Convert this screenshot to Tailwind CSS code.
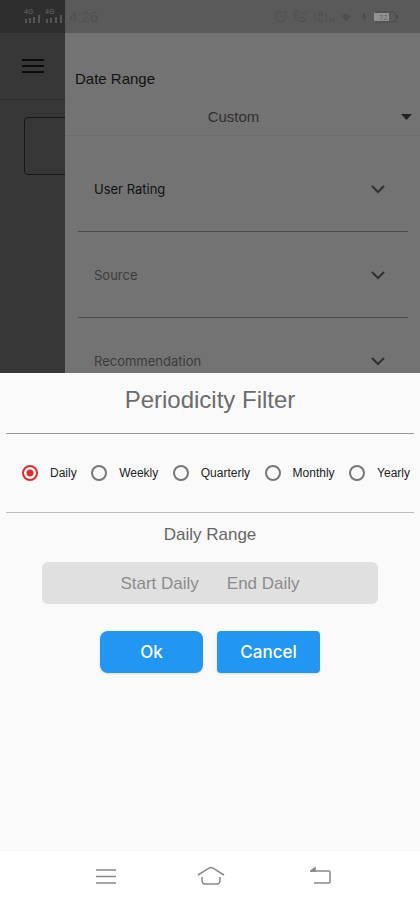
<!DOCTYPE html>
<html lang="en">
<head>
<meta charset="utf-8">
<meta name="viewport" content="width=device-width, initial-scale=1">
<title>Periodicity Filter</title>
<script src="https://cdn.jsdelivr.net/npm/@tailwindcss/browser@4"></script>
</head>
<body class="flex min-h-screen flex-col bg-[#fafafa] font-['Liberation_Sans','Arial',sans-serif]">

<div class="flex h-[373px] overflow-hidden">
  <!-- Page behind the drawer -->
  <div class="flex w-[65px] shrink-0 flex-col overflow-hidden bg-[#373737]">
    <div class="h-[33px] bg-[#2e2e2e] pt-2 pl-6">
      <svg class="h-4 w-[41px]" viewBox="0 0 41 16" fill="#565656" aria-label="Signal">
        <text x="0" y="6" font-size="7" font-weight="700">4G</text>
        <text x="21" y="6" font-size="7" font-weight="700">4G</text>
        <path d="M1 11h2v4h-2zM5 10h2v5h-2zM9 9h2v6h-2zM14 7h2v8h-2zM22 11h2v4h-2zM26 10h2v5h-2zM31 9h2v6h-2zM36 7h2v8h-2z"/>
      </svg>
    </div>
    <div class="h-[67px] border-b border-[#303030] pt-[25px] pl-[22px]">
      <button type="button" aria-label="Open menu" class="block">
        <svg class="h-4 w-[22px]" viewBox="0 0 22 16" fill="#0c0c0c"><path d="M0 1h22v2H0zM0 7h22v2H0zM0 13h22v2H0z"/></svg>
      </button>
    </div>
    <div class="mt-[17px] ml-6 h-[58px] w-20 shrink-0 rounded border border-[#181818]"></div>
  </div>

  <!-- Filter drawer -->
  <div class="flex min-w-0 flex-1 flex-col bg-[#737373]">
    <div class="flex h-[33px] shrink-0 items-center justify-between bg-[#5a5a5a] pt-px pr-[22px] pl-1 text-[#505050]">
      <span class="text-[15px]">4:26</span>
      <div class="flex items-center gap-1">
        <svg class="h-4 w-[96px]" viewBox="0 0 96 16" fill="none" stroke="#4e4e4e" aria-label="Alarm, call, network">
          <circle cx="7" cy="8" r="5"/><path d="M7 5v3h3M1 4l3-3M13 4l-3-3"/>
          <path d="M20 3c0 5 4 10 9 10l2-3-3-2-2 1-3-3 1-2-2-3zM27 3l3 3 3-4"/>
          <path d="M41 4v9M45 3v4h3v-4zM45 9v4h3v-4M52 5v8M56 9v4l4-4v4"/>
          <path d="M68 7q4-3 8 0l-4 5z" fill="#4e4e4e"/>
          <path d="M91 4l-3 4h4l-2 4" fill="#444"/>
        </svg>
        <svg class="h-3 w-6" viewBox="0 0 24 12" aria-label="Battery 72">
          <rect x="1" y="1" width="21" height="10" rx="3" fill="#5a5a5a" stroke="#4b4b4b"/><path d="M0 2h15v8H0z" fill="#929292"/><path d="M22 4h2v4h-2z" fill="#4b4b4b"/>
          <text x="5" y="9" font-size="8" fill="#666">72</text>
        </svg>
      </div>
    </div>
    <div class="border-b border-[#6c6c6c] pt-[34px] pr-2 pb-[6px] pl-[10px]">
      <label for="range" class="block text-[15px] leading-6 text-[#111]">Date Range</label>
      <div class="relative mt-[14px]">
        <select id="range" class="block h-6 w-full appearance-none bg-transparent pr-5 text-[15px] text-[#303030] [text-align-last:center]">
          <option>Custom</option>
        </select>
        <svg class="pointer-events-none absolute top-[9px] right-0 h-[6px] w-[11px]" viewBox="0 0 11 6" fill="#222"><path d="M0 0h11L5.500 6z"/></svg>
      </div>
    </div>
    <div class="pt-[10px] pr-3 pl-[13px] font-['Inter','Roboto',sans-serif] text-[13px] text-[#3c3c3c]">
      <button type="button" class="flex h-[86px] w-full items-center justify-between border-b border-[#4b4b4b] pt-[2px] pr-[22px] pl-4 text-[#111]">User Rating
        <svg class="h-[10px] w-4" viewBox="0 0 16 10" fill="none" stroke="#303030" stroke-width="2"><path d="M2 1l6 6 6-6"/></svg></button>
      <button type="button" class="flex h-[86px] w-full items-center justify-between border-b border-[#4b4b4b] pt-[2px] pr-[22px] pl-4">Source
        <svg class="h-[10px] w-4" viewBox="0 0 16 10" fill="none" stroke="#303030" stroke-width="2"><path d="M2 1l6 6 6-6"/></svg></button>
      <button type="button" class="flex h-[86px] w-full items-center justify-between border-b border-[#4b4b4b] pt-[2px] pr-[22px] pl-4">Recommendation
        <svg class="h-[10px] w-4" viewBox="0 0 16 10" fill="none" stroke="#303030" stroke-width="2"><path d="M2 1l6 6 6-6"/></svg></button>
    </div>
  </div>
</div>

<!-- Bottom sheet -->
<main class="flex flex-1 flex-col">
  <h1 class="pt-[11px] pb-[17px] text-center text-2xl leading-8 text-[#6c6c6c]">Periodicity Filter</h1>
  <div role="radiogroup" aria-label="Periodicity" class="mx-[6px] flex h-20 items-center justify-between border-y border-t-[#999] border-b-[#bbb] pr-1 pl-4 text-[12px] text-[#222]">
    <label class="flex items-center gap-3"><input type="radio" name="period" checked class="h-4 w-4 appearance-none rounded-full border-2 border-[#777] checked:border-[#e32b2b] checked:bg-[radial-gradient(circle,#e32b2b_0_3px,transparent_4px)]">Daily</label>
    <label class="flex items-center gap-3"><input type="radio" name="period" class="h-4 w-4 appearance-none rounded-full border-2 border-[#777] checked:border-[#e32b2b] checked:bg-[radial-gradient(circle,#e32b2b_0_3px,transparent_4px)]">Weekly</label>
    <label class="flex items-center gap-3"><input type="radio" name="period" class="h-4 w-4 appearance-none rounded-full border-2 border-[#777] checked:border-[#e32b2b] checked:bg-[radial-gradient(circle,#e32b2b_0_3px,transparent_4px)]">Quarterly</label>
    <label class="flex items-center gap-3"><input type="radio" name="period" class="h-4 w-4 appearance-none rounded-full border-2 border-[#777] checked:border-[#e32b2b] checked:bg-[radial-gradient(circle,#e32b2b_0_3px,transparent_4px)]">Monthly</label>
    <label class="flex items-center gap-3"><input type="radio" name="period" class="h-4 w-4 appearance-none rounded-full border-2 border-[#777] checked:border-[#e32b2b] checked:bg-[radial-gradient(circle,#e32b2b_0_3px,transparent_4px)]">Yearly</label>
  </div>
  <h2 class="pt-[10px] text-center text-[17px] leading-6 text-[#666]">Daily Range</h2>
  <div class="mx-[42px] mt-[15px] flex h-[42px] items-center justify-center gap-7 rounded-md bg-[#e0e0e0] pt-[2px] text-[17px] text-[#8c8c8c]">
    <button type="button">Start Daily</button>
    <button type="button">End Daily</button>
  </div>
  <div class="mt-[27px] flex justify-center gap-[14px] font-['Inter','Roboto',sans-serif] text-[17px] font-medium text-white">
    <button type="button" class="h-[42px] w-[103px] rounded-lg bg-[#2196f3] pt-[2px] shadow">Ok</button>
    <button type="button" class="h-[42px] w-[103px] rounded bg-[#2196f3] pt-[2px] shadow">Cancel</button>
  </div>
</main>

<!-- System navigation -->
<nav class="flex h-12 items-center justify-between bg-white pr-[88px] pl-[95px]">
  <button type="button" aria-label="Recent apps"><svg class="h-5 w-[22px]" viewBox="0 0 22 20" fill="none" stroke="#888" stroke-width="1.500"><path d="M1 4h20M1 10.500h20M1 17h20"/></svg></button>
  <button type="button" aria-label="Home" class="mr-[6px]"><svg class="h-5 w-7" viewBox="0 0 28 20" fill="none" stroke="#888" stroke-width="1.500"><path d="M1 9L12 2.200q2-1.200 4 0L27 9M5 11v3q0 4 3 4h12q3 0 3-4v-3"/></svg></button>
  <button type="button" aria-label="Back"><svg class="h-5 w-[22px]" viewBox="0 0 22 20" fill="none" stroke="#888" stroke-width="1.500"><path d="M5 2L1 5h18q1 0 1 1v10q0 1-1 1H4"/><path d="M5 2v3H1z" fill="#888"/></svg></button>
</nav>
</body>
</html>
